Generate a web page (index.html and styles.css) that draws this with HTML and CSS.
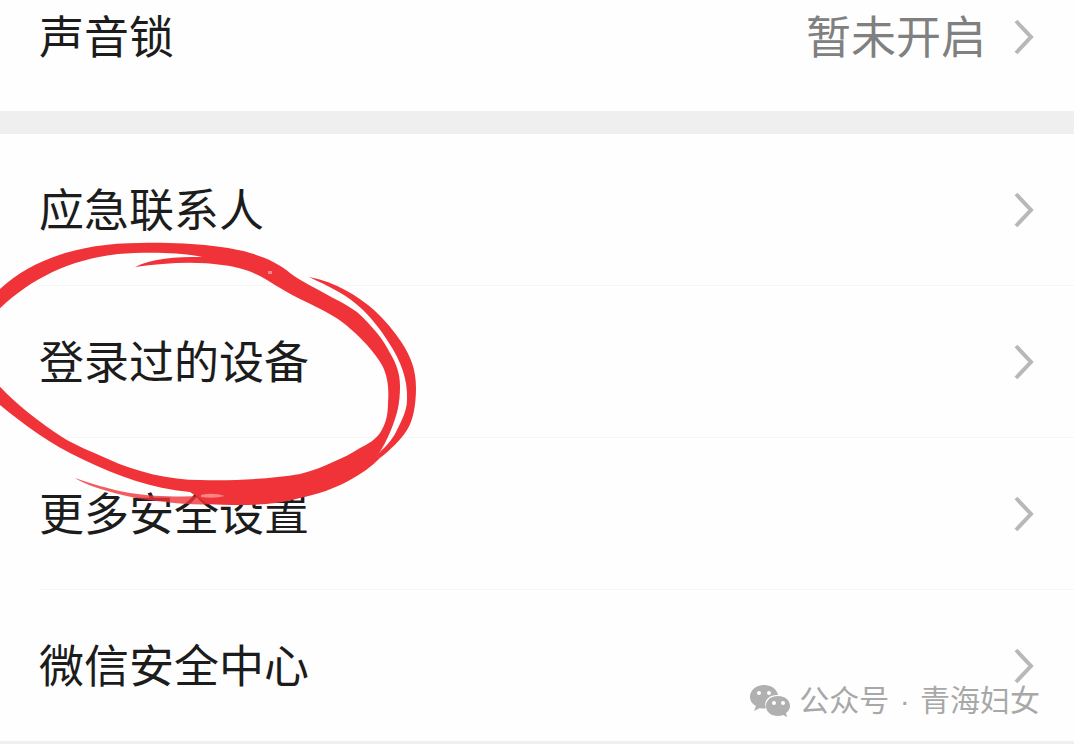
FILE: index.html
```
<!DOCTYPE html>
<html lang="zh-CN">
<head>
    <meta charset="UTF-8">
    <meta name="viewport" content="width=device-width, initial-scale=1.0">
    <title>帐号与安全</title>
    <link rel="stylesheet" href="styles.css">
</head>
<body>
    <main class="settings">
        <ul class="group group-first">
            <li class="row">
                <a class="row-link" href="#voice">
                    <span class="label">声音锁</span>
                    <span class="value">暂未开启</span>
                    <svg class="arrow" viewBox="0 0 20 36" aria-hidden="true"><path d="M2 2 L17 18 L2 34"/></svg>
                </a>
            </li>
        </ul>

        <ul class="group">
            <li class="row">
                <a class="row-link" href="#contacts">
                    <span class="label">应急联系人</span>
                    <svg class="arrow" viewBox="0 0 20 36" aria-hidden="true"><path d="M2 2 L17 18 L2 34"/></svg>
                </a>
            </li>
            <li class="row">
                <a class="row-link" href="#devices">
                    <span class="label">登录过的设备</span>
                    <svg class="arrow" viewBox="0 0 20 36" aria-hidden="true"><path d="M2 2 L17 18 L2 34"/></svg>
                </a>
                <!-- 手绘红圈 -->
                <svg class="circle-mark" viewBox="0 230 430 290" aria-hidden="true">
                    <path class="ink ink-tail" d="M75 478 C88 487 130 499 165 502 C182 504 198 505 215 504 L240 494
                        C200 497 160 498 130 493 C108 489 90 483 75 478 Z"/>
                    <path class="ink" d="M-6 295 C25 262 75 243 140 243 C190 242 230 247 250 253 C265 257 280 264 290 273
                        C300 281 318 289 333 298 C343 303 350 307 357 312 C365 319 371 326 377 333 C382 339 387 347 390 353
                        C396 363 400 373 400 386 C400 404 397 415 391 430 C387 440 382 449 377 456 L380 458
                        C371 467 361 474 350 480 C334 489 318 494 300 498 C272 506 238 506 208 504 L190 492
                        C150 488 120 477 82 459 C48 443 20 422 -6 400
                        L-6 380 C10 399 36 420 62 437 C76 446 91 451 108 459
                        C136 472 170 480 200 480 C234 481 270 479 300 474 C312 471 323 467 333 462 C343 458 352 453 360 448
                        C368 444 375 440 380 433 C386 424 388 414 388 403 C389 389 388 378 383 367
                        C379 359 373 352 367 345 C358 335 345 323 333 316 C323 310 311 304 300 299
                        C290 294 278 287 267 280 C252 271 239 267 222 265 C195 261 164 263 135 267 C153 258 174 257 202 257
                        C180 252 145 252 118 254 C66 260 27 281 -6 314 Z"/>
                    <path class="ink" d="M309 277 C336 282 358 296 374 310 C385 320 394 331 402 343 C411 357 416 370 416 388
                        C416 405 413 421 407 430 C400 441 391 449 380 458 L376 456
                        C384 448 392 441 397 430 C402 420 407 410 407 400 C408 380 401 361 389 343
                        C381 330 373 320 363 310 C348 295 328 286 309 277 Z"/>
                    <path class="glare" d="M201 495 Q213 492 225 496 Q214 499 201 497 Z M268 271 L272 271 L272 274 L268 274 Z"/>
                </svg>
            </li>
            <li class="row">
                <a class="row-link" href="#more">
                    <span class="label">更多安全设置</span>
                    <svg class="arrow" viewBox="0 0 20 36" aria-hidden="true"><path d="M2 2 L17 18 L2 34"/></svg>
                </a>
            </li>
            <li class="row">
                <a class="row-link" href="#center">
                    <span class="label">微信安全中心</span>
                    <svg class="arrow" viewBox="0 0 20 36" aria-hidden="true"><path d="M2 2 L17 18 L2 34"/></svg>
                </a>
                <!-- 水印 -->
                <div class="watermark">
                    <svg class="wechat" viewBox="0 0 42 34" aria-hidden="true">
                        <path d="M15 1 C7 1 1 6 1 13 C1 17 3 20 7 22 L5 27 L11 24 Q14 25 17 24 C14 16 21 10 29 11 C28 5 22 1 15 1 Z"/>
                        <path d="M29 12 C22 12 17 16 17 22 C17 28 22 32 29 32 Q32 32 34 31 L38 33 L37 29 Q41 26 41 22 C41 16 36 12 29 12 Z"/>
                        <g fill="#fff">
                            <circle cx="10" cy="9" r="2"/>
                            <circle cx="20" cy="9" r="2"/>
                            <circle cx="25" cy="19" r="2"/>
                            <circle cx="34" cy="19" r="2"/>
                        </g>
                    </svg>
                    <span>公众号<span class="dot"> · </span>青海妇女</span>
                </div>
            </li>
        </ul>
    </main>
</body>
</html>
```
FILE: styles.css
```
* {
    box-sizing: border-box;
}
body {
    margin: 0;
    background: #efefef;
    font-family: "Liberation Sans", "Noto Sans CJK SC", sans-serif;
    overflow: hidden;
}
.group {
    list-style: none;
    margin: 0;
    padding: 0;
    background: #fefefe;
}
.group-first {
    margin-bottom: 23px;
}
.row {
    position: relative;
    padding-left: 39px;
}
.row-link {
    display: flex;
    align-items: center;
    padding: 44px 40px 43px 0;
    border-bottom: 1px solid #f5f5f5;
    color: #1c1c1c;
    font-size: 45px;
    line-height: 60px;
    text-decoration: none;
}
.row:last-child .row-link {
    border-bottom: none;
}
.group-first .row-link {
    padding-top: 5px;
    padding-bottom: 42px;
}
.label,
.value {
    padding-top: 4px;
}
.label {
    flex: 1;
}
.value {
    color: #808080;
    margin-right: 28px;
}
.arrow {
    width: 20px;
    height: 36px;
    fill: none;
    stroke: #b8b8b8;
    stroke-width: 4;
}

/* 红圈 */
.circle-mark {
    position: absolute;
    top: -56px;
    left: 0;
    width: 430px;
    height: 290px;
    z-index: 1;
    pointer-events: none;
}
.ink {
    fill: #f03338;
}
.ink-tail {
    opacity: 0.8;
}
.glare {
    fill: #fa8585;
}

/* 水印 */
.watermark {
    position: absolute;
    right: 34px;
    bottom: 20px;
    display: flex;
    align-items: center;
    gap: 8px;
    color: #a8a8a8;
    font-size: 30px;
    line-height: 40px;
}
.wechat {
    width: 42px;
    height: 34px;
    fill: #b0b0b0;
}
.dot {
    margin: 0 2px;
}
```
